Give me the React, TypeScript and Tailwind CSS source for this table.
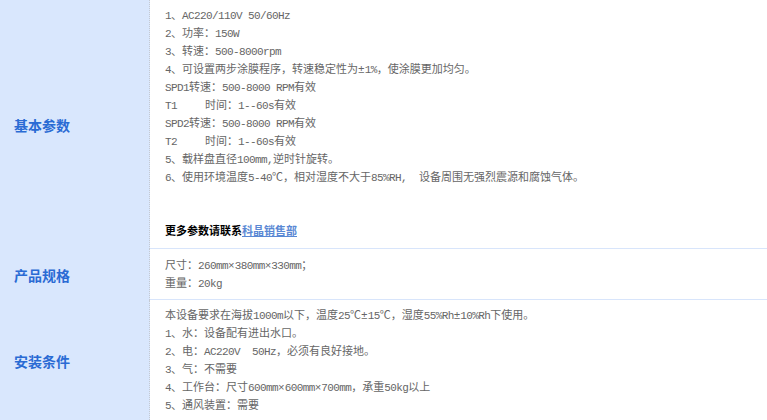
import React from 'react';

type Row = {
  label: string;
  lines: React.ReactNode[];
  bodyClass: string;
};

// SimSun-like half-width Latin: ASCII runs get a narrower mono look
const Txt: React.FC<{ s: string }> = ({ s }) => {
  const parts = s.split(/([\x20-\x7e]+)/).filter((p) => p !== '');
  return (
    <>
      {parts.map((p, i) =>
        /^[\x20-\x7e]+$/.test(p) ? (
          <span key={i} className="text-[11px] tracking-[-0.6px]">
            {p}
          </span>
        ) : (
          <span key={i}>{p}</span>
        )
      )}
    </>
  );
};

const Line: React.FC<{ s: string }> = ({ s }) => (
  <p className="h-[18px] leading-[18px] whitespace-pre">
    <Txt s={s} />
  </p>
);

const TLine: React.FC<{ t: string; s: string }> = ({ t, s }) => (
  <p className="h-[18px] leading-[18px] whitespace-pre">
    <span className="inline-block w-[40px]">
      <Txt s={t} />
    </span>
    <Txt s={s} />
  </p>
);

const rows: Row[] = [
  {
    label: '基本参数',
    bodyClass: 'pt-[7px] pb-[7px]',
    lines: [
      <Line key="1" s="1、AC220/110V 50/60Hz" />,
      <Line key="2" s="2、功率：150W" />,
      <Line key="3" s="3、转速：500-8000rpm" />,
      <Line key="4" s="4、可设置两步涂膜程序，转速稳定性为±1%，使涂膜更加均匀。" />,
      <Line key="5" s="SPD1转速：500-8000 RPM有效" />,
      <TLine key="6" t="T1" s="时间：1--60s有效" />,
      <Line key="7" s="SPD2转速：500-8000 RPM有效" />,
      <TLine key="8" t="T2" s="时间：1--60s有效" />,
      <Line key="9" s="5、载样盘直径100mm,逆时针旋转。" />,
      <Line key="10" s="6、使用环境温度5-40℃，相对湿度不大于85%RH,  设备周围无强烈震源和腐蚀气体。" />,
      <div key="sp" className="h-[36px]" />,
      <p key="more" className="h-[18px] leading-[18px] font-bold text-black">
        更多参数请联系
        <a href="#" className="text-[#5a88d4] underline">
          科晶销售部
        </a>
      </p>,
    ],
  },
  {
    label: '产品规格',
    bodyClass: 'pt-[8px] pb-[6px]',
    lines: [
      <Line key="1" s="尺寸：260mm×380mm×330mm；" />,
      <Line key="2" s="重量：20kg" />,
    ],
  },
  {
    label: '安装条件',
    bodyClass: 'pt-[7px] pb-[7px]',
    lines: [
      <Line key="1" s="本设备要求在海拔1000m以下，温度25℃±15℃，湿度55%Rh±10%Rh下使用。" />,
      <Line key="2" s="1、水：设备配有进出水口。" />,
      <Line key="3" s="2、电：AC220V  50Hz，必须有良好接地。" />,
      <Line key="4" s="3、气：不需要" />,
      <Line key="5" s="4、工作台：尺寸600mm×600mm×700mm，承重50kg以上" />,
      <Line key="6" s="5、通风装置：需要" />,
    ],
  },
];

export default function App() {
  return (
    <div className="w-[767px] h-[420px] overflow-hidden bg-white font-['Liberation_Mono','Noto_Sans_CJK_SC',monospace] text-[11px] text-[#666]">
      {rows.map((row, idx) => (
        <div key={row.label} className="flex">
          <div className="w-[150px] shrink-0 flex items-center pl-[14px] bg-[#d9e7fd] border-r border-dotted border-[#c4c9d2]">
            <span className="font-['Noto_Sans_CJK_SC',sans-serif] text-[14px] font-bold text-[#2a6bd4] leading-[20px]">
              {row.label}
            </span>
          </div>
          <div
            className={`flex-1 pl-[15px] ${row.bodyClass} ${
              idx < rows.length - 1 ? 'border-b border-[#d8e5fb]' : ''
            }`}
          >
            {row.lines}
          </div>
        </div>
      ))}
    </div>
  );
}
